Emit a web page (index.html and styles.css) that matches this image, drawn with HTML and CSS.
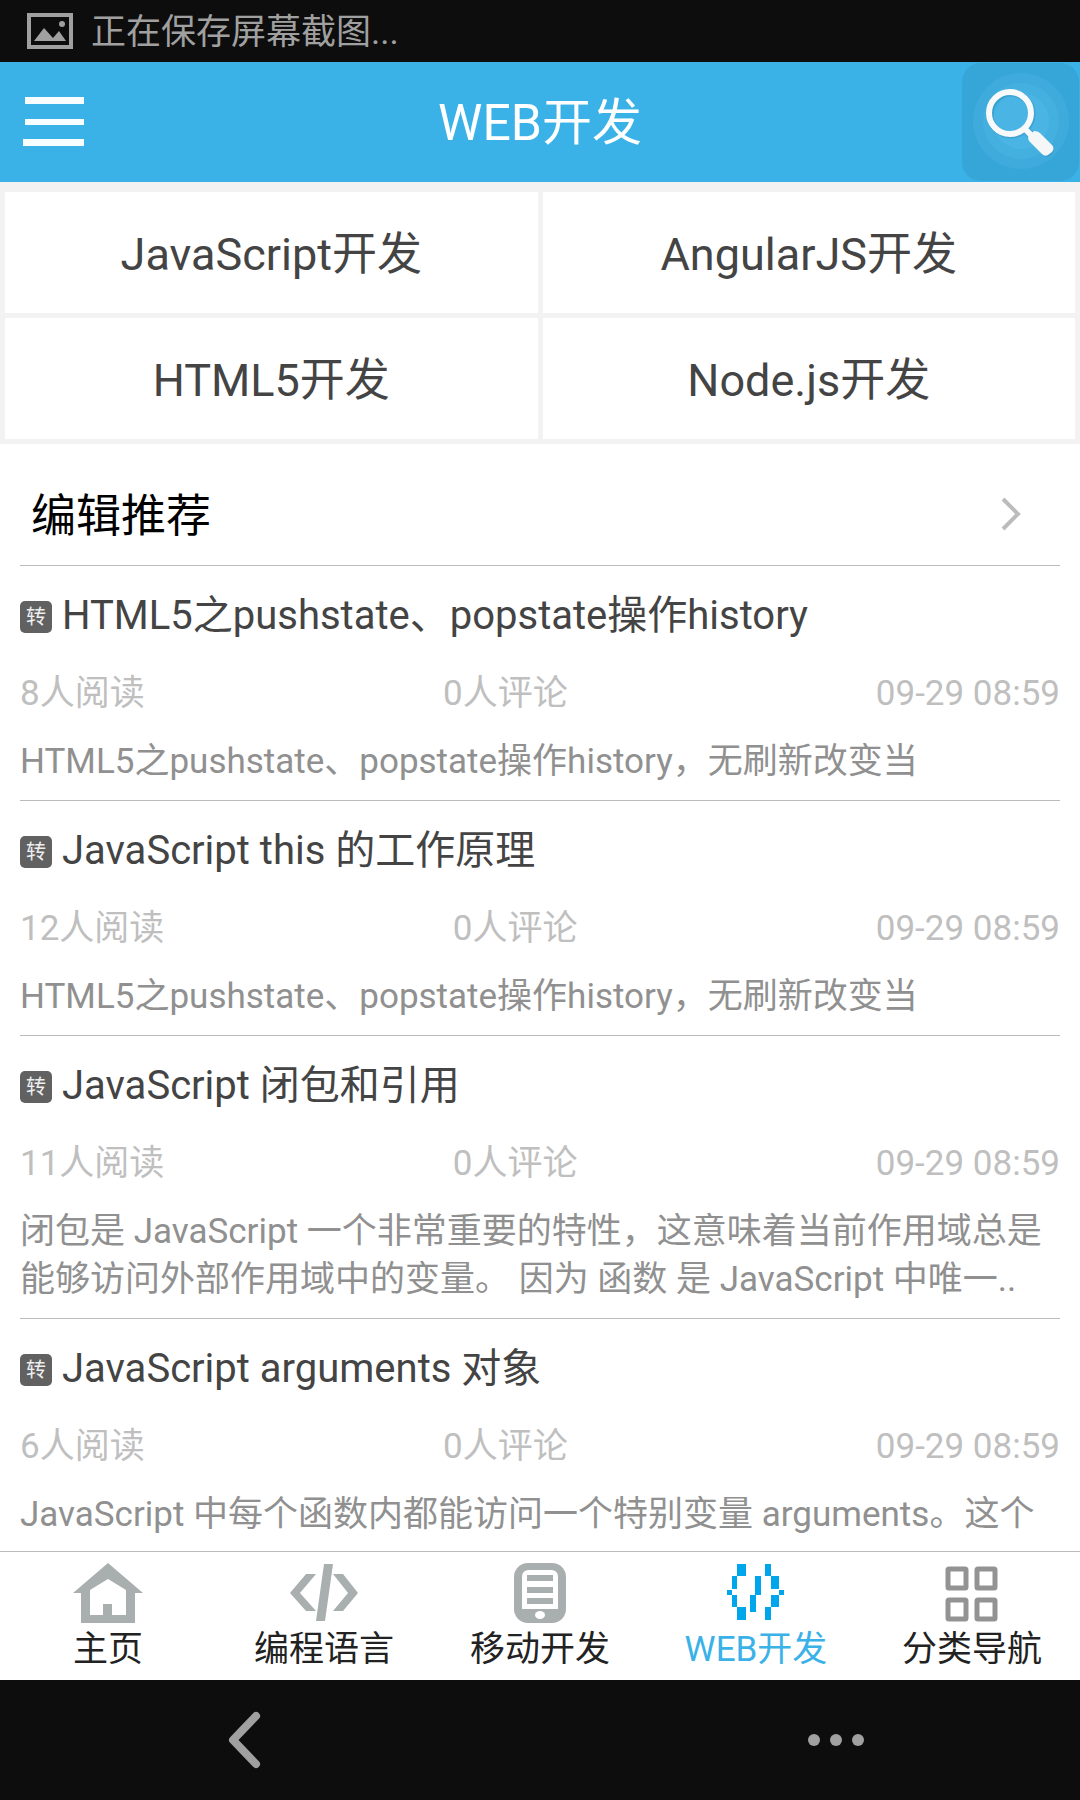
FILE: index.html
```html
<!DOCTYPE html>
<html lang="zh-CN">
<head>
<meta charset="utf-8">
<meta name="viewport" content="width=device-width, initial-scale=1">
<title>WEB开发</title>
<link rel="stylesheet" href="styles.css">
</head>
<body>
<div class="status">
  <svg width="46" height="36" viewBox="0 0 46 36" aria-hidden="true"><rect x="2" y="2" width="42" height="32" fill="none" stroke="#a0a0a0" stroke-width="4"/><path d="M7 28 17 15 26 25 32 18 39 28Z" fill="#a0a0a0"/><circle cx="35" cy="11" r="3" fill="#a0a0a0"/></svg>
  <span class="status-text">正在保存屏幕截图...</span>
</div>

<header class="topbar">
  <button class="menu-btn" type="button" aria-label="菜单">
    <svg width="62" height="50" viewBox="0 0 62 50"><path d="M2 0H61V7H2ZM2 22H61V28H2ZM0 42H61V49H0Z" fill="#f8fdff"/></svg>
  </button>
  <h1 class="topbar-title">WEB开发</h1>
  <button class="search-btn" type="button" aria-label="搜索">
    <svg width="118" height="120" viewBox="0 0 118 120">
      <rect x="0" y="1" width="117" height="118" rx="19" fill="#36a5d8"/>
      <circle cx="59" cy="59" r="48" fill="#3fabdc"/>
      <circle cx="59" cy="59" r="38" fill="#44b0e0"/>
      <circle cx="59" cy="59" r="28" fill="#4ab5e5"/>
      <g opacity=".25" transform="translate(1 1)"><circle cx="48" cy="51" r="21" fill="none" stroke="#1b6f98" stroke-width="7"/><path d="M63 67 68 72" stroke="#1b6f98" stroke-width="8"/><path d="M68 72 76 69 91 84Q91 93 83 94L67 78Z" fill="#1b6f98"/></g>
      <circle cx="48" cy="51" r="21" fill="none" stroke="#f7f9fa" stroke-width="6"/>
      <path d="M62 66 69 73" stroke="#f7f9fa" stroke-width="6"/>
      <path d="M66 75 72 69Q76 69 78 71L90 83Q93 86 90 90L86 93Q83 95 80 92L68 80Q66 78 66 75Z" fill="#f5f6f7"/>
    </svg>
  </button>
</header>

<main class="content">
  <nav class="topics">
    <a class="topic" href="#javascript">JavaScript开发</a>
    <a class="topic" href="#angularjs">AngularJS开发</a>
    <a class="topic" href="#html5">HTML5开发</a>
    <a class="topic" href="#nodejs">Node.js开发</a>
  </nav>

  <section class="feed">
    <a class="feed-head" href="#recommended">
      <h2 class="feed-title">编辑推荐</h2>
      <svg width="20" height="34" viewBox="0 0 20 34" aria-hidden="true"><path d="M2 2 17 17 2 32" fill="none" stroke="#bcbcbc" stroke-width="4"/></svg>
    </a>

    <article class="item">
      <h3 class="item-title"><span class="badge">转</span><a href="#a1">HTML5之pushstate、popstate操作history</a></h3>
      <div class="meta"><span>8人阅读</span><span>0人评论</span><time>09-29 08:59</time></div>
      <p class="summary">HTML5之pushstate、popstate操作history，无刷新改变当</p>
    </article>
    <article class="item">
      <h3 class="item-title"><span class="badge">转</span><a href="#a2">JavaScript this 的工作原理</a></h3>
      <div class="meta"><span>12人阅读</span><span>0人评论</span><time>09-29 08:59</time></div>
      <p class="summary">HTML5之pushstate、popstate操作history，无刷新改变当</p>
    </article>
    <article class="item">
      <h3 class="item-title"><span class="badge">转</span><a href="#a3">JavaScript 闭包和引用</a></h3>
      <div class="meta"><span>11人阅读</span><span>0人评论</span><time>09-29 08:59</time></div>
      <p class="summary">闭包是 JavaScript 一个非常重要的特性，这意味着当前作用域总是能够访问外部作用域中的变量。 因为 函数 是 JavaScript 中唯一..</p>
    </article>
    <article class="item">
      <h3 class="item-title"><span class="badge">转</span><a href="#a4">JavaScript arguments 对象</a></h3>
      <div class="meta"><span>6人阅读</span><span>0人评论</span><time>09-29 08:59</time></div>
      <p class="summary">JavaScript 中每个函数内都能访问一个特别变量 arguments。这个</p>
    </article>
  </section>
</main>

<nav class="tabs">
  <a class="tab" href="#home">
    <svg width="72" height="62" viewBox="0 0 72 62" aria-hidden="true"><path fill="#a9afaf" fill-rule="evenodd" d="M36 1 71 31H63V61H9V31H1ZM36 17 18 28V53H31V42H40V53H54V28Z"/></svg>
    <span>主页</span>
  </a>
  <a class="tab" href="#languages">
    <svg width="72" height="62" viewBox="0 0 72 62" aria-hidden="true"><path fill="#a9afaf" d="M2 31 18 12H28L12 31 28 49H18ZM36 2H45L37 59H28ZM45 12H55L70 31 55 49H45L60 31Z"/></svg>
    <span>编程语言</span>
  </a>
  <a class="tab" href="#mobile">
    <svg width="72" height="62" viewBox="0 0 72 62" aria-hidden="true"><rect x="10" y="1" width="52" height="60" rx="14" fill="#a9afaf"/><path d="M18 15Q18 8 25 8H47Q54 8 54 15V47H18Z" fill="#fff"/><path d="M23 13H49V19H23ZM23 25H49V31H23ZM23 36H49V42H23Z" fill="#a9afaf"/><ellipse cx="36" cy="53" rx="5" ry="4" fill="#fff"/></svg>
    <span>移动开发</span>
  </a>
  <a class="tab tab-active" href="#web" aria-current="page">
    <svg width="72" height="62" viewBox="0 0 72 62" aria-hidden="true"><path fill="#00a6ec" d="M17 2H26V14H17ZM12 14H17V27H12ZM7 28H12V33H7ZM12 33H17V45H12ZM17 45H26V58H17ZM35 14H41V33H35ZM30 33H36V50H30ZM45 2H51V14H45ZM51 14H59V27H51ZM59 28H64V33H59ZM51 33H59V45H51ZM45 45H51V58H45Z"/></svg>
    <span>WEB开发</span>
  </a>
  <a class="tab" href="#categories">
    <svg width="72" height="62" viewBox="0 0 72 62" aria-hidden="true"><g fill="none" stroke="#939393" stroke-width="5"><rect x="12" y="7" width="18" height="19" rx="1"/><rect x="41" y="7" width="18" height="19" rx="1"/><rect x="12" y="38" width="18" height="19" rx="1"/><rect x="41" y="38" width="18" height="19" rx="1"/></g></svg>
    <span>分类导航</span>
  </a>
</nav>

<div class="sysbar">
  <button type="button" aria-label="返回"><svg width="56" height="60" viewBox="0 0 56 60"><path d="M40 6 17 30 40 54" fill="none" stroke="#a0a0a0" stroke-width="8" stroke-linecap="round" stroke-linejoin="round"/></svg></button>
  <button type="button" aria-label="更多"><svg width="56" height="60" viewBox="0 0 56 60" fill="#a0a0a0"><circle cx="6" cy="30" r="6"/><circle cx="28" cy="30" r="6"/><circle cx="50" cy="30" r="6"/></svg></button>
</div>
</body>
</html>
```
FILE: styles.css
```css
* { box-sizing: border-box; }

body {
  margin: 0;
  height: 100vh;
  display: flex;
  flex-direction: column;
  background: #fff;
  color: #444;
  font-family: Roboto, "Noto Sans CJK SC", sans-serif;
  font-size: 35px;
  line-height: 48px;
}

h1, h2, h3, p { margin: 0; font-weight: 400; }
a { color: inherit; text-decoration: none; }
svg { display: block; }
button { padding: 0; border: 0; background: none; cursor: pointer; }

.status {
  flex: none;
  height: 62px;
  display: flex;
  align-items: center;
  gap: 18px;
  padding: 0 27px;
  background: #0d0d0d;
  color: #a0a0a0;
}
.status-text { padding-top: 4px; }

.topbar {
  flex: none;
  display: grid;
  grid-template-columns: 118px 1fr 118px;
  align-items: center;
  height: 120px;
  background: #3bb2e7;
}
.menu-btn { padding-left: 23px; }
.topbar-title {
  padding-top: 2px;
  text-align: center;
  color: #fff;
  font-size: 50px;
  line-height: 60px;
}

.content {
  flex: 1;
  min-height: 0;
  overflow-y: auto;
  scrollbar-width: none;
}

.topics {
  display: grid;
  grid-template-columns: 1fr 1fr;
  gap: 5px;
  padding: 10px 5px 5px;
  background: #f2f2f2;
}
.topic {
  padding: 34px 0 30px;
  background: #fff;
  text-align: center;
  font-size: 45px;
  line-height: 57px;
}

.feed { padding: 0 20px; }
.feed-head {
  display: flex;
  align-items: center;
  justify-content: space-between;
  padding: 38px 39px 20px 11px;
  border-bottom: 1px solid #bbb;
}
.feed-title {
  padding-top: 6px;
  color: #000;
  font-size: 45px;
  line-height: 57px;
}

.item {
  padding: 22px 0 14px;
  border-bottom: 1px solid #bbb;
}
.item-title {
  display: flex;
  align-items: center;
  gap: 10px;
  font-size: 40px;
  line-height: 56px;
}
.badge {
  flex: none;
  width: 32px;
  height: 32px;
  margin-top: 2px;
  border-radius: 5px;
  background: #616161;
  color: #eee;
  text-align: center;
  font-size: 20px;
  line-height: 32px;
}
.meta {
  display: flex;
  justify-content: space-between;
  margin: 26px 0 20px;
  color: #bfbfbf;
}
.meta time {
  min-width: 194px;
  text-align: right;
}
.summary { color: #909090; }

.tabs {
  flex: none;
  display: flex;
  border-top: 1px solid #bbb;
  background: #fff;
  color: #222;
}
.tab {
  flex: 1;
  display: flex;
  flex-direction: column;
  align-items: center;
  gap: 2px;
  padding: 10px 0 6px;
}
.tab-active { color: #3bb2e7; }

.sysbar {
  flex: none;
  display: flex;
  align-items: center;
  justify-content: space-between;
  height: 120px;
  padding: 0 20%;
  background: #0d0d0d;
}
```
